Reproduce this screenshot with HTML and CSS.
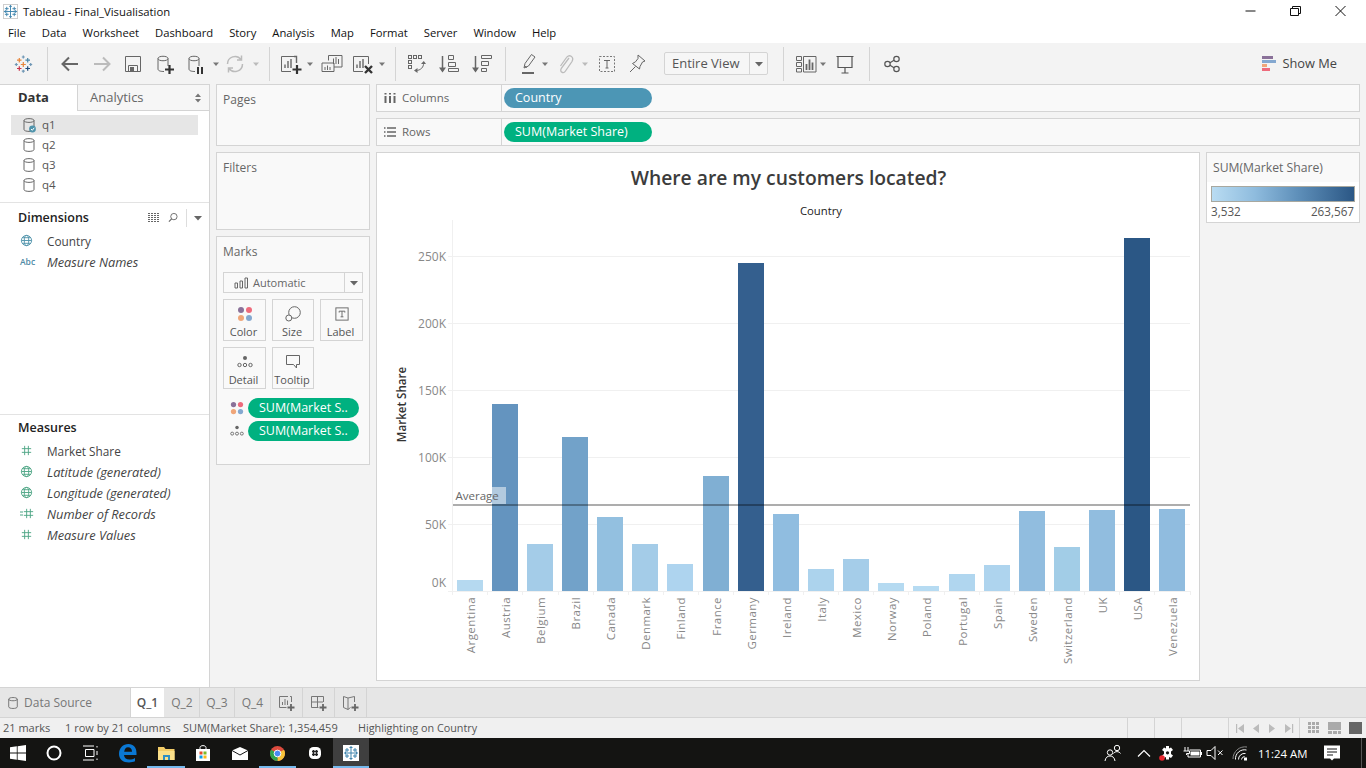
FILE: index.html
```html
<!DOCTYPE html>
<html lang="en">
<head>
<meta charset="utf-8">
<title>Tableau - Final_Visualisation</title>
<link rel="stylesheet" href="styles.css">
</head>
<body>
<svg class="defs" width="0" height="0" aria-hidden="true">
  <defs>
    <symbol id="cyl" viewBox="0 0 14 16"><path d="M2 3.5C2 1 12 1 12 3.5V12.5C12 15 2 15 2 12.5ZM2 3.5C2 6 12 6 12 3.5" fill="none" stroke="#666" stroke-width="1"/></symbol>
    <symbol id="globe" viewBox="0 0 14 14"><g fill="none" stroke="#4f93ab" stroke-width="1"><circle cx="7" cy="7" r="5.5"/><ellipse cx="7" cy="7" rx="2.4" ry="5.5"/><path d="M1.5 7H12.500M2.500 4H11.500M2.500 10H11.500"/></g></symbol>
    <symbol id="globeg" viewBox="0 0 14 14"><g fill="none" stroke="#4ea585" stroke-width="1"><circle cx="7" cy="7" r="5.5"/><ellipse cx="7" cy="7" rx="2.4" ry="5.5"/><path d="M1.5 7H12.500M2.500 4H11.500M2.500 10H11.500"/></g></symbol>
    <symbol id="hash" viewBox="0 0 14 14"><path d="M5 2V12M9 2V12M2 5H12M2 9H12" fill="none" stroke="#4ea585" stroke-width="1"/></symbol>
    <symbol id="dots4" viewBox="0 0 16 16"><circle cx="4" cy="4" r="3" fill="#8a7199"/><circle cx="12" cy="4" r="3" fill="#ee6b7c"/><circle cx="4" cy="12" r="3" fill="#f0a679"/><circle cx="12" cy="12" r="3" fill="#84a8d0"/></symbol>
    <symbol id="detail" viewBox="0 0 16 14"><circle cx="8" cy="3" r="2" fill="#666"/><g fill="none" stroke="#666"><circle cx="2.500" cy="10" r="1.700"/><circle cx="8" cy="10" r="1.700"/><circle cx="13.500" cy="10" r="1.700"/></g></symbol>
    <symbol id="flake" viewBox="0 0 16 16"><g fill="none" stroke="#3f84ad" stroke-width="1"><path d="M8 1V15M1 8H15M6.500 2.500H9.500M6.500 13.500H9.500M2.500 6.500V9.500M13.500 6.500V9.500M4 3V7M2 5H6M12 3V7M10 5H14M4 9V13M2 11H6M12 9V13M10 11H14"/></g></symbol>
    <symbol id="caret" viewBox="0 0 8 24"><path d="M1 10.500H7L4 14Z" fill="#777"/></symbol>
    <symbol id="caretl" viewBox="0 0 8 24"><path d="M1 10.500H7L4 14Z" fill="#bbb"/></symbol>
  </defs>
</svg>

<header class="titlebar">
  <svg class="applogo" width="15" height="15" viewBox="0 0 16 16"><rect x=".5" y=".5" width="15" height="15" fill="#fff" stroke="#ccc"/><use href="#flake" width="16" height="16"/></svg>
  <span class="apptitle">Tableau - Final_Visualisation</span>
  <div class="winctl">
    <svg width="45" height="20" viewBox="0 0 45 20"><path d="M17.500 10H27.500" stroke="#111"/></svg>
    <svg width="45" height="20" viewBox="0 0 45 20"><path d="M17.500 7.500H25.500V14.500H17.500ZM19.500 7.500V5.500H27.500V12.500H25.500" fill="none" stroke="#111"/></svg>
    <svg width="45" height="20" viewBox="0 0 45 20"><path d="M17.500 5L27.500 15M27.500 5L17.500 15" stroke="#111" fill="none"/></svg>
  </div>
</header>

<nav class="menubar">
  <span>File</span><span>Data</span><span>Worksheet</span><span>Dashboard</span><span>Story</span><span>Analysis</span><span>Map</span><span>Format</span><span>Server</span><span>Window</span><span>Help</span>
</nav>

<div class="toolbar">
  <svg class="ic m11" viewBox="0 0 24 24"><g fill="none" stroke-width="1.200"><path d="M12.300 3.500V6.500M10.800 5H13.800M5.300 11V14M3.800 12.500H6.800M19.700 11V14M18.200 12.500H21.200M12.300 17.700V20.700M10.800 19.200H13.800" stroke="#6f97b5"/><path d="M8.300 6V10.500M6 8.200H10.500M12.300 10V15M9.800 12.500H14.800" stroke="#e8853a"/><path d="M16.700 6V10.500M14.400 8.200H19" stroke="#4b87a8"/><path d="M8.300 14.200V18.800M6 16.500H10.500" stroke="#c8334b"/><path d="M16.700 14.200V18.800M14.400 16.500H19" stroke="#1f4a78"/></g></svg>
  <i class="sep m12"></i>
  <svg class="ic m10" viewBox="0 0 24 24"><path d="M20 12H5M11 5.500L4.500 12L11 18.500" fill="none" stroke="#666" stroke-width="2"/></svg>
  <svg class="ic m8" viewBox="0 0 24 24"><path d="M4 12H19M13 5.500L19.500 12L13 18.500" fill="none" stroke="#bbb" stroke-width="2"/></svg>
  <svg class="ic m7" viewBox="0 0 24 24"><path d="M4.500 4.500H19.500V19.500H4.500ZM7.500 19.500V13.500H16.500V19.500" fill="none" stroke="#666"/><rect x="9" y="15" width="4" height="4.500" fill="#666"/></svg>
  <svg class="ic m8" viewBox="0 0 24 24"><path d="M5 6.500C5 3.500 15 3.500 15 6.500V14M5 6.500C5 9.500 15 9.500 15 6.500M5 6.500V17C5 19 8 19.500 11 19.500" fill="none" stroke="#666"/><path d="M16.500 13V22M12 17.500H21" stroke="#333" stroke-width="2.200"/></svg>
  <svg class="ic m7" viewBox="0 0 24 24"><path d="M5 6.500C5 3.500 15 3.500 15 6.500V14M5 6.500C5 9.500 15 9.500 15 6.500M5 6.500V17C5 19 8 19.500 11 19.500" fill="none" stroke="#666"/><path d="M14 15V22M18 15V22" stroke="#333" stroke-width="2"/></svg>
  <svg class="car m4" viewBox="0 0 8 24"><use href="#caret"/></svg>
  <svg class="ic m3" viewBox="0 0 24 24"><path d="M4.500 12A7.500 7.500 0 0 1 18 7.500M19.500 12A7.500 7.500 0 0 1 6 16.500M18.500 3.500V8H14M5.500 20.500V16H10" fill="none" stroke="#bbb" stroke-width="1.500"/></svg>
  <svg class="car m5" viewBox="0 0 8 24"><use href="#caretl"/></svg>
  <i class="sep m9"></i>
  <svg class="ic m9" viewBox="0 0 24 24"><path d="M15 4.500H2.500V19.500H12" fill="none" stroke="#666"/><path d="M15 4.500H17.500V11M6 16V12.500M9 16V9M12 16V7" fill="none" stroke="#666" stroke-width="1.400"/><path d="M18 13V22M13.500 17.500H22.500" stroke="#333" stroke-width="2.200"/></svg>
  <svg class="car m3" viewBox="0 0 8 24"><use href="#caret"/></svg>
  <svg class="ic m6" viewBox="0 0 24 24"><path d="M8.500 8.500V3.500H22V15H14M2 11H14V19.500H2Z" fill="none" stroke="#666"/><path d="M13.500 12V6.500M16 12V5M18.500 12V7M5 18V15M7.500 18V13.500M10 18V15" stroke="#666"/></svg>
  <svg class="ic m7" viewBox="0 0 24 24"><path d="M17.500 4.500H2.500V19.500H12M17.500 4.500V12" fill="none" stroke="#666"/><path d="M6 16V12.500M9 16V9M12 16V7" stroke="#666" stroke-width="1.400"/><path d="M14 14L21 21M21 14L14 21" stroke="#333" stroke-width="2.400"/></svg>
  <svg class="car m3" viewBox="0 0 8 24"><use href="#caret"/></svg>
  <i class="sep m9"></i>
  <svg class="ic m9" viewBox="0 0 24 24"><g fill="none" stroke="#666"><rect x="3.500" y="3.500" width="3" height="3"/><rect x="8.500" y="3.500" width="3" height="3"/><rect x="13.500" y="3.500" width="3" height="3"/><rect x="3.500" y="8.500" width="3" height="3"/><rect x="3.500" y="13.500" width="3" height="3"/><path d="M18.500 11C19 15 15.500 18.500 11 18.500"/></g><path d="M16 12L18.800 9L21 12ZM12.500 16V21L9 18.500Z" fill="#666"/></svg>
  <svg class="ic m8" viewBox="0 0 24 24"><path d="M5.500 4V19" stroke="#666" stroke-width="1.500"/><path d="M2 15.500L5.500 20.500L9 15.500Z" fill="#666"/><path d="M11.500 3.500H16.500V7.500H11.500ZM11.500 10.500H18.500V14.500H11.500ZM11.500 16.500H21.500V19.500H11.500Z" fill="none" stroke="#666"/></svg>
  <svg class="ic m9" viewBox="0 0 24 24"><path d="M5.500 4V19" stroke="#666" stroke-width="1.500"/><path d="M2 15.500L5.500 20.500L9 15.500Z" fill="#666"/><path d="M11.500 3.500H21.500V6.500H11.500ZM11.500 9.500H18.500V13.500H11.500ZM11.500 16.500H16.500V19.500H11.500Z" fill="none" stroke="#666"/></svg>
  <i class="sep m11"></i>
  <svg class="ic m10" viewBox="0 0 24 24"><path d="M8 16L9 11.500L15.500 2.500L19 5L12.500 14ZM8.500 14L11 15.500" fill="none" stroke="#666"/><path d="M6 21H18" stroke="#666" stroke-width="2"/></svg>
  <svg class="car m1" viewBox="0 0 8 24"><use href="#caret"/></svg>
  <svg class="ic m4" viewBox="0 0 24 24"><path d="M16 6L8.500 16C6 20 10.500 22 12.500 19L19 9.500C21.500 5 16 1.500 13.500 5.500L7.500 14" fill="none" stroke="#bbb" stroke-width="1.300"/></svg>
  <svg class="car m4" viewBox="0 0 8 24"><use href="#caretl"/></svg>
  <svg class="ic m6" viewBox="0 0 24 24"><rect x="4.500" y="4.500" width="15" height="15" fill="none" stroke="#777" stroke-dasharray="2 1.500"/><path d="M9 8.500H15M12 8.500V16M10.500 16H13.500" fill="none" stroke="#666"/></svg>
  <svg class="ic m6" viewBox="0 0 24 24"><path d="M13 3L20 9L17.500 10L15 14.500L14.500 17L7.500 11.500L10.500 9.800L13 6.500ZM10.500 14.500L5 20" fill="none" stroke="#666"/></svg>
  <div class="select m15"><span class="sel-label">Entire View</span><span class="sel-arrow"><svg width="8" height="24" viewBox="0 0 8 24"><path d="M0 10H8L4 14.500Z" fill="#666"/></svg></span></div>
  <i class="sep m15"></i>
  <svg class="ic m10" viewBox="0 0 24 24"><path d="M2.500 4.500H7.500V8.500H2.500ZM2.500 10.500H7.500V14.500H2.500ZM2.500 16.500H7.500V20H2.500ZM9.500 4.500H22V20H9.500Z" fill="none" stroke="#666"/><path d="M12.500 18V12M15.500 18V7.500M18.500 18V10.500" stroke="#666" stroke-width="1.800"/></svg>
  <svg class="car m1" viewBox="0 0 8 24"><use href="#caret"/></svg>
  <svg class="ic m6" viewBox="0 0 24 24"><path d="M3.500 4.500H20.500M5 4.500V15.500H19V4.500M12 15.500V21M8.500 21H15.500" fill="none" stroke="#555" stroke-width="1.200"/></svg>
  <i class="sep m12"></i>
  <svg class="ic m10" viewBox="0 0 24 24"><g fill="none" stroke="#555" stroke-width="1.200"><circle cx="16.500" cy="7" r="2.700"/><circle cx="16.500" cy="17" r="2.700"/><circle cx="7.500" cy="12" r="2.700"/><path d="M10 10.700L14 8.300M10 13.300L14 15.700"/></g></svg>
  <div class="showme">
    <svg width="15" height="16" viewBox="0 0 15 16"><rect y="0" width="11" height="3" fill="#8a7199"/><rect y="4" width="14" height="3" fill="#84a8d0"/><rect y="8" width="5" height="3" fill="#f0a679"/><rect y="12" width="8" height="3" fill="#ee6b7c"/></svg>
    <span>Show Me</span>
  </div>
</div>

<main class="main">
  <aside class="datapane">
    <div class="tabs">
      <span class="tab-data">Data</span>
      <span class="tab-analytics"><span class="an-label">Analytics</span>
        <svg width="8" height="10" viewBox="0 0 8 10"><path d="M1 4H7L4 .5ZM1 6H7L4 9.500Z" fill="#777"/></svg>
      </span>
    </div>
    <ul class="sources">
      <li class="on"><svg width="14" height="16" viewBox="0 0 14 16"><use href="#cyl" width="14" height="16"/><circle cx="10.500" cy="12" r="3.400" fill="#4f93ab"/><path d="M9 12L10.300 13.300L12.200 10.800" fill="none" stroke="#fff"/></svg><span>q1</span></li>
      <li><svg width="14" height="16"><use href="#cyl" width="14" height="16"/></svg><span>q2</span></li>
      <li><svg width="14" height="16"><use href="#cyl" width="14" height="16"/></svg><span>q3</span></li>
      <li><svg width="14" height="16"><use href="#cyl" width="14" height="16"/></svg><span>q4</span></li>
    </ul>
    <section class="fields dims">
      <div class="fieldhead"><b>Dimensions</b>
        <span class="headtools">
          <svg width="12" height="9" viewBox="0 0 12 9"><path d="M0 .5H12M0 2.500H12M0 4.500H12M0 6.500H12M0 8.500H12" stroke="#666" stroke-dasharray="2 1"/></svg>
          <svg width="10" height="11" viewBox="0 0 11 11"><circle cx="6.500" cy="4.500" r="3.500" fill="none" stroke="#666"/><path d="M4 7L1 10" stroke="#666" stroke-width="1.300"/></svg>
          <i class="toolsep"></i>
          <svg width="8" height="6" viewBox="0 0 8 6"><path d="M0 1H8L4 5.500Z" fill="#666"/></svg>
        </span>
      </div>
      <div class="field"><span class="fi"><svg width="13" height="13"><use href="#globe" width="13" height="13"/></svg></span>Country</div>
      <div class="field it"><span class="fi abc">Abc</span>Measure Names</div>
    </section>
    <section class="fields meas">
      <div class="fieldhead"><b>Measures</b></div>
      <div class="field"><span class="fi"><svg width="13" height="13"><use href="#hash" width="13" height="13"/></svg></span>Market Share</div>
      <div class="field it"><span class="fi"><svg width="13" height="13"><use href="#globeg" width="13" height="13"/></svg></span>Latitude (generated)</div>
      <div class="field it"><span class="fi"><svg width="13" height="13"><use href="#globeg" width="13" height="13"/></svg></span>Longitude (generated)</div>
      <div class="field it"><span class="fi"><svg width="16" height="13" viewBox="0 0 16 13"><path d="M0 5H3M0 8H3" stroke="#4ea585"/><use href="#hash" x="2" width="13" height="13"/></svg></span>Number of Records</div>
      <div class="field it"><span class="fi"><svg width="13" height="13"><use href="#hash" width="13" height="13"/></svg></span>Measure Values</div>
    </section>
  </aside>

  <div class="cards">
    <section class="card pages"><h3>Pages</h3></section>
    <section class="card filters"><h3>Filters</h3></section>
    <section class="card marks">
      <h3>Marks</h3>
      <div class="marktype">
        <span class="mt-label"><svg width="14" height="12" viewBox="0 0 14 12"><path d="M1 6H3.500V11H1ZM6 4H8.500V11H6ZM11 1H13.500V11H11Z" fill="none" stroke="#666"/></svg>Automatic</span>
        <span class="mt-arrow"><svg width="8" height="6" viewBox="0 0 8 6"><path d="M0 1H8L4 5.500Z" fill="#666"/></svg></span>
      </div>
      <div class="markgrid">
        <div class="mbtn"><svg width="16" height="16"><use href="#dots4" width="16" height="16"/></svg><span>Color</span></div>
        <div class="mbtn"><svg width="16" height="16" viewBox="0 0 16 16"><circle cx="9.500" cy="6.500" r="5.800" fill="none" stroke="#666"/><circle cx="3.800" cy="12" r="3" fill="#fafafa" stroke="#666"/></svg><span>Size</span></div>
        <div class="mbtn"><svg width="16" height="16" viewBox="-1.500 -1.500 17 17"><rect x=".5" y=".5" width="13" height="13" fill="none" stroke="#666"/><path d="M4 4H10M7 4V10M5.500 10H8.500M4 4V5.500M10 4V5.500" fill="none" stroke="#666"/></svg><span>Label</span></div>
        <div class="mbtn"><svg width="16" height="16"><use href="#detail" width="16" height="16"/></svg><span>Detail</span></div>
        <div class="mbtn"><svg width="16" height="16" viewBox="0 0 16 16"><path d="M1.500 1.500H14.500V10.500H11.500V14L8.500 10.500H1.500Z" fill="none" stroke="#666"/></svg><span>Tooltip</span></div>
      </div>
      <div class="markpill"><svg width="14" height="14"><use href="#dots4" width="14" height="14"/></svg><span class="pill green">SUM(Market S..</span></div>
      <div class="markpill"><svg width="14" height="14"><use href="#detail" width="14" height="14"/></svg><span class="pill green">SUM(Market S..</span></div>
    </section>
  </div>

  <div class="work">
    <div class="shelf">
      <div class="shelflabel"><svg width="12" height="10" viewBox="0 0 12 10"><path d="M1.500 3V10M6 3V10M10.500 3V10" stroke="#666" stroke-width="2"/><path d="M1.500 0V1.500M6 0V1.500M10.500 0V1.500" stroke="#666" stroke-width="2"/></svg><span>Columns</span></div>
      <div class="shelfbody"><span class="pill blue wide">Country</span></div>
    </div>
    <div class="shelf">
      <div class="shelflabel"><svg width="12" height="10" viewBox="0 0 12 10"><path d="M3 1H12M3 5H12M3 9H12" stroke="#666" stroke-width="1.600"/><path d="M0 1H1.500M0 5H1.500M0 9H1.500" stroke="#666" stroke-width="1.600"/></svg><span>Rows</span></div>
      <div class="shelfbody"><span class="pill green wide">SUM(Market Share)</span></div>
    </div>
    <div class="vizrow">
      <div class="viz">
        <svg class="chart" width="822" height="527" viewBox="377 153 822 527">
          <text class="charttitle" x="788.500" y="185" text-anchor="middle">Where are my customers located?</text>
          <text class="axtitle" x="821" y="215" text-anchor="middle">Country</text>
          <text class="axtitle strong" transform="translate(405.500 404.500) rotate(-90)" text-anchor="middle">Market Share</text>
          <g class="grid">
            <path d="M452.500 220V595M448 256.500H1190M448 323.500H1190M448 390.500H1190M448 457.500H1190M448 524.500H1190M448 591.500H1190"/>
            <path d="M452.500 591V595M487.500 591V595M522.500 591V595M558.500 591V595M593.500 591V595M628.500 591V595M663.500 591V595M698.500 591V595M733.500 591V595M768.500 591V595M803.500 591V595M838.500 591V595M873.500 591V595M908.500 591V595M944.500 591V595M979.500 591V595M1014.500 591V595M1049.500 591V595M1084.500 591V595M1119.500 591V595M1154.500 591V595M1190.500 591V595"/>
          </g>
          <g class="yticks" text-anchor="end">
            <text x="446" y="261">250K</text><text x="446" y="328">200K</text><text x="446" y="395">150K</text><text x="446" y="462">100K</text><text x="446" y="529">50K</text><text x="446" y="587">0K</text>
          </g>
          <g>
            <rect x="457" y="580" width="26" height="11" fill="#b5d9f0"/>
            <rect x="492" y="404" width="26" height="187" fill="#6494bf"/>
            <rect x="527" y="544" width="26" height="47" fill="#a4cce8"/>
            <rect x="562" y="437" width="26" height="154" fill="#72a2c9"/>
            <rect x="597" y="517" width="26" height="74" fill="#93c0e0"/>
            <rect x="632" y="544" width="26" height="47" fill="#a4cce8"/>
            <rect x="667" y="564" width="26" height="27" fill="#aed4ef"/>
            <rect x="703" y="476" width="26" height="115" fill="#80afd3"/>
            <rect x="738" y="263" width="26" height="328" fill="#345f8e"/>
            <rect x="773" y="514" width="26" height="77" fill="#90bde0"/>
            <rect x="808" y="569" width="26" height="22" fill="#acd3ed"/>
            <rect x="843" y="559" width="26" height="32" fill="#a5cde9"/>
            <rect x="878" y="583" width="26" height="8" fill="#b5daf1"/>
            <rect x="913" y="586" width="26" height="5" fill="#b6dbf2"/>
            <rect x="949" y="574" width="26" height="17" fill="#b0d6ef"/>
            <rect x="984" y="565" width="26" height="26" fill="#aed4ee"/>
            <rect x="1019" y="511" width="26" height="80" fill="#91bddf"/>
            <rect x="1054" y="547" width="26" height="44" fill="#a2cde7"/>
            <rect x="1089" y="510" width="26" height="81" fill="#91bddf"/>
            <rect x="1124" y="238" width="26" height="353" fill="#2b5785"/>
            <rect x="1159" y="509" width="26" height="82" fill="#90bcdf"/>
          </g>
          <rect x="455" y="487" width="51" height="17" fill="#fff" fill-opacity=".5"/>
          <rect x="453" y="504" width="737" height="2" fill="#000" fill-opacity=".32"/>
          <text class="avg" x="455.500" y="500">Average</text>
          <g class="xticks" text-anchor="end">
            <text transform="translate(474.500 597) rotate(-90)">Argentina</text>
            <text transform="translate(509.500 597) rotate(-90)">Austria</text>
            <text transform="translate(544.500 597) rotate(-90)">Belgium</text>
            <text transform="translate(579.500 597) rotate(-90)">Brazil</text>
            <text transform="translate(614.500 597) rotate(-90)">Canada</text>
            <text transform="translate(649.500 597) rotate(-90)">Denmark</text>
            <text transform="translate(684.500 597) rotate(-90)">Finland</text>
            <text transform="translate(720.500 597) rotate(-90)">France</text>
            <text transform="translate(755.500 597) rotate(-90)">Germany</text>
            <text transform="translate(790.500 597) rotate(-90)">Ireland</text>
            <text transform="translate(825.500 597) rotate(-90)">Italy</text>
            <text transform="translate(860.500 597) rotate(-90)">Mexico</text>
            <text transform="translate(895.500 597) rotate(-90)">Norway</text>
            <text transform="translate(930.500 597) rotate(-90)">Poland</text>
            <text transform="translate(966.500 597) rotate(-90)">Portugal</text>
            <text transform="translate(1001.500 597) rotate(-90)">Spain</text>
            <text transform="translate(1036.500 597) rotate(-90)">Sweden</text>
            <text transform="translate(1071.500 597) rotate(-90)">Switzerland</text>
            <text transform="translate(1106.500 597) rotate(-90)">UK</text>
            <text transform="translate(1141.500 597) rotate(-90)">USA</text>
            <text transform="translate(1176.500 597) rotate(-90)">Venezuela</text>
          </g>
        </svg>
      </div>
      <aside class="legend">
        <div class="legendhead">SUM(Market Share)</div>
        <div class="legendbody">
          <div class="ramp"></div>
          <div class="ramplabels"><span>3,532</span><span>263,567</span></div>
        </div>
      </aside>
    </div>
  </div>
</main>

<div class="sheetbar">
  <div class="ds"><svg width="12" height="14"><use href="#cyl" width="12" height="14"/></svg>Data Source</div>
  <div class="stab active">Q_1</div>
  <div class="stab">Q_2</div>
  <div class="stab">Q_3</div>
  <div class="stab q4">Q_4</div>
  <div class="addtab"><svg width="18" height="18" viewBox="0 0 18 18"><path d="M10 2.500H1.500V13.500H8.500M12 2.500H13.500V8M4.500 11V8M7 11V5M9.500 11V6.500" fill="none" stroke="#777"/><path d="M13 10V17M9.500 13.500H16.500" stroke="#666" stroke-width="1.800"/></svg></div>
  <div class="addtab"><svg width="18" height="18" viewBox="0 0 18 18"><path d="M8.500 13.500H1.500V2.500H13.500V8M1.500 8H13M7.500 2.500V13.500" fill="none" stroke="#777"/><path d="M13 10V17M9.500 13.500H16.500" stroke="#666" stroke-width="1.800"/></svg></div>
  <div class="addtab"><svg width="18" height="18" viewBox="0 0 18 18"><path d="M8.500 13.500L6 15.500V4L1.500 2.500V13.500L6 15.500M6 4L12.500 2.500V8" fill="none" stroke="#777"/><path d="M13 10V17M9.500 13.500H16.500" stroke="#666" stroke-width="1.800"/></svg></div>
</div>

<footer class="statusbar">
  <span class="st1">21 marks</span>
  <span class="st2">1 row by 21 columns</span>
  <span class="st3">SUM(Market Share): 1,354,459</span>
  <span class="st4">Highlighting on Country</span>
  <div class="stcells">
    <i class="c27"></i><i class="c27"></i><i class="c47"></i>
    <div class="c71"><svg width="71" height="21" viewBox="0 0 71 21"><g fill="#bbb"><path d="M7 6V15H8.200V6ZM15 6V15L9 10.500ZM30 6V15L24 10.500ZM40 6V15L46 10.500ZM56 6V15L62 10.500ZM63 6V15H64.200V6Z"/></g></svg></div>
    <div class="c67"><svg width="67" height="21" viewBox="0 0 67 21"><g fill="#aaa"><path d="M8 4H11V7H8ZM12 4H15V7H12ZM16 4H19V7H16ZM8 8H11V11H8ZM12 8H15V11H12ZM16 8H19V11H16ZM8 12H11V15H8ZM12 12H15V15H12ZM16 12H19V15H16Z"/><path d="M28 4H41V12H28ZM28 13H32V16H28ZM33 13H37V16H33ZM38 13H41V16H38Z"/></g><rect x="49" y="4" width="13" height="12" fill="#666"/></svg></div>
  </div>
</footer>

<div class="taskbar">
  <div class="tk t36"><svg width="16" height="16" viewBox="0 0 16 16"><path d="M0 2.300L6.800 1.300V7.600H0ZM7.600 1.200L16 0V7.600H7.600ZM0 8.400H6.800V14.700L0 13.700ZM7.600 8.400H16V16L7.600 14.800Z" fill="#fff"/></svg></div>
  <div class="tk t36"><svg width="16" height="16" viewBox="0 0 16 16"><circle cx="8" cy="8" r="6.500" fill="none" stroke="#fff" stroke-width="2"/></svg></div>
  <div class="tk t37"><svg width="16" height="16" viewBox="0 0 16 16"><path d="M2.500 4.500H11V11.500H2.500ZM0 1H11M0 15H11M14 1V2.500M14 6V10M14 13.500V15" fill="none" stroke="#fff"/></svg></div>
  <div class="tk t38"><svg width="20" height="20" viewBox="0 0 20 20"><path d="M1 11C1 5 5 1 10.500 1C15.500 1 18.500 4.500 18.500 10V12H6C6.200 15 8.500 16.500 11.500 16.500C13.500 16.500 15.500 16 17 15V18.300C15.500 19 13.300 19.500 11 19.500C5 19.500 1 16 1 11ZM6.200 8.800H14C14 6 12.500 4.300 10 4.300C7.800 4.300 6.500 6.200 6.200 8.800Z" fill="#0a78d4"/></svg></div>
  <div class="tk t38 run"><svg width="17" height="15" viewBox="0 0 17 15"><path d="M0 1H6L7.500 3H16.500V14H0Z" fill="#f3cd68"/><path d="M0 5H16.500V14H0Z" fill="#fbe08a"/><path d="M5 9H12V14H10V11H7V14H5Z" fill="#2f8fc4"/></svg></div>
  <div class="tk t36"><svg width="16" height="16" viewBox="0 0 16 16"><path d="M1 4H15V16H1Z" fill="#fff"/><path d="M5 4V2.500C5 0 11 0 11 2.500V4" fill="none" stroke="#fff"/><rect x="4.500" y="6.500" width="3" height="3" fill="#e74b2a"/><rect x="8.500" y="6.500" width="3" height="3" fill="#7db928"/><rect x="4.500" y="10.500" width="3" height="3" fill="#0c9be6"/><rect x="8.500" y="10.500" width="3" height="3" fill="#fbb917"/></svg></div>
  <div class="tk t38"><svg width="16" height="13" viewBox="0 0 16 13"><path d="M0 3.500L8 0L16 3.500V13H0Z" fill="#fff"/><path d="M0 3.500L8 8L16 3.500" fill="none" stroke="#141414"/></svg></div>
  <div class="tk t37 run"><svg width="15" height="15" viewBox="0 0 16 16"><circle cx="8" cy="8" r="8" fill="#dd4b3e"/><path d="M8 8L14.900 4A8 8 0 0 1 8 16Z" fill="#f6c33a"/><path d="M8 8V16A8 8 0 0 1 1.100 4Z" fill="#2fa44f"/><circle cx="8" cy="8" r="3.600" fill="#4a8af4" stroke="#fff"/></svg></div>
  <div class="tk t37"><svg width="14" height="14" viewBox="0 0 14 14"><rect x="1" y="1" width="12" height="12" rx="4.500" fill="#fff"/><path d="M5.500 4V10M8.500 4V10M4 5.500H10M4 8.500H10" stroke="#222" stroke-width="1.400"/></svg></div>
  <div class="tk t36 run cur"><svg width="16" height="16" viewBox="0 0 16 16"><rect width="16" height="16" fill="#fff"/><use href="#flake" width="16" height="16"/></svg></div>
  <div class="tray">
    <svg class="ti" viewBox="0 0 20 20"><g fill="none" stroke="#fff"><circle cx="7" cy="9.500" r="2.700"/><path d="M2 18C2.500 14.500 4.500 13 7 13C9.500 13 11.500 14.500 12 18"/><circle cx="14" cy="5" r="2.700"/><path d="M10.500 10.500C12 8 16 8 17.500 10.500"/></g></svg>
    <svg class="ti m11" viewBox="0 0 20 20"><path d="M4 13.500L10 7.500L16 13.500" fill="none" stroke="#fff" stroke-width="1.200"/></svg>
    <svg class="ti m3" viewBox="0 0 20 20"><path d="M9 3H12V5.500L14 4.500L16 7L14 8.500V11L16 12.500L14 15L12 14V16.500H9V14L7 15L5 12.500L7 11V8.500L5 7L7 4.500L9 5.500Z" fill="#fff"/><circle cx="10.500" cy="9.800" r="1.600" fill="#141414"/><circle cx="5" cy="15" r="2.800" fill="#e8262e"/></svg>
    <svg class="ti m5" viewBox="0 0 20 20"><path d="M3 8V4M6 8V4M1.500 8H7.500V10.500H4.500V12M6 7.500H6" fill="none" stroke="#fff"/><path d="M7.500 7H18.500V14H6V10" fill="none" stroke="#fff"/><rect x="8.500" y="8.500" width="9" height="4" fill="#fff"/><path d="M19.500 9V12" stroke="#fff"/></svg>
    <svg class="ti m3" viewBox="0 0 20 20"><path d="M2 7.500H6L10 3.500V16.500L6 12.500H2Z" fill="none" stroke="#fff"/><path d="M13 7.500L17.500 12M17.500 7.500L13 12" stroke="#fff"/></svg>
    <svg class="ti m6" viewBox="0 0 20 20"><g fill="none" stroke="#fff"><path d="M2 16A12 12 0 0 1 16 4" stroke="#888"/><path d="M4.500 16.500A9 9 0 0 1 15.500 7"/><path d="M7.500 16.500A6 6 0 0 1 14.500 10.500"/><path d="M10.500 16.500A3.500 3.500 0 0 1 13.500 13.500"/></g><rect x="13" y="14.500" width="3" height="3" fill="#fff"/></svg>
    <span class="clock m7">11:24 AM</span>
    <svg class="ti m15" viewBox="0 0 20 20"><path d="M2 2.500H18V15.500H12L10 17.500L8 15.500H2Z" fill="#fff"/><path d="M5 6H15M5 9H15M5 12H11" stroke="#141414"/></svg>
    <i class="trayedge m19"></i>
  </div>
</div>
</body>
</html>
```

FILE: styles.css
```css
* { box-sizing: border-box; }
html, body { margin: 0; padding: 0; }
body {
  width: 1366px;
  height: 768px;
  overflow: hidden;
  display: flex;
  flex-direction: column;
  background: #fff;
  font-family: "Open Sans", "Noto Sans", sans-serif;
  font-size: 11.5px;
  color: #555;
}
.defs { position: absolute; }

.m1 { margin-left: 1px; } .m3 { margin-left: 3px; } .m4 { margin-left: 4px; } .m5 { margin-left: 5px; }
.m6 { margin-left: 6px; } .m7 { margin-left: 7px; } .m8 { margin-left: 8px; } .m9 { margin-left: 9px; }
.m10 { margin-left: 10px; } .m11 { margin-left: 11px; } .m12 { margin-left: 12px; } .m15 { margin-left: 15px; }
.m19 { margin-left: 19px; }

/* window chrome */
.titlebar { height: 22px; display: flex; align-items: center; padding-left: 3px; flex: none; }
.applogo { margin-right: 5px; }
.apptitle { font-size: 11.3px; color: #111; }
.winctl { margin-left: auto; display: flex; padding-right: 3px; }
.menubar { height: 21px; flex: none; display: flex; gap: 16px; padding-left: 8px; align-items: center; font-size: 11.25px; color: #111; }

/* toolbar */
.toolbar { height: 41px; flex: none; background: #f3f3f3; display: flex; align-items: center; }
.ic { width: 24px; height: 24px; flex: none; }
.car { width: 8px; height: 24px; flex: none; }
.sep { width: 1px; height: 34px; background: #d4d4d4; flex: none; }
.select { width: 104px; height: 23px; display: flex; flex: none; border: 1px solid #d4d4d4; border-radius: 2px; background: #f6f6f6; font-size: 13px; color: #555; }
.sel-label { flex: 1; padding-left: 7px; line-height: 20px; }
.sel-arrow { width: 18px; border-left: 1px solid #d4d4d4; display: flex; justify-content: center; align-items: center; }
.showme { margin-left: auto; padding: 0 29px 2px 0; display: flex; align-items: center; gap: 6px; font-size: 12.8px; color: #444; }
.showme svg { margin-top: 2px; }

/* main */
.main { flex: 1; min-height: 0; display: flex; background: #f3f3f3; }
.datapane { width: 210px; flex: none; background: #fff; border-right: 1px solid #d4d4d4; display: flex; flex-direction: column; }
.tabs { display: flex; height: 27px; flex: none; font-size: 13px; }
.tab-data { width: 77px; padding-left: 18px; line-height: 25px; font-weight: 700; color: #333; border-top: 1px solid #d4d4d4; }
.tab-analytics { flex: 1; display: flex; justify-content: space-between; align-items: center; padding: 0 7px 0 12px; background: #f6f6f6; border: 1px solid #d4d4d4; border-right: 0; color: #666; }
.an-label { margin-top: -2px; }
.sources { list-style: none; margin: 0; padding: 4px 11px 0; height: 92px; flex: none; border-bottom: 1px solid #e3e3e3; }
.sources li { height: 20px; display: flex; align-items: center; gap: 6px; padding-left: 11px; width: 187px; font-size: 11.5px; color: #555; }
.sources li span { margin-top: -2px; }
.sources li.on { background: #e6e6e6; }
.fields { flex: none; }
.dims { height: 212px; border-bottom: 1px solid #e3e3e3; }
.fieldhead { height: 27px; display: flex; align-items: center; justify-content: space-between; padding: 2px 7px 0 18px; }
.fieldhead b { font-size: 12.5px; font-weight: 600; color: #222; }
.meas .fieldhead { height: 25px; padding-top: 0; }
.headtools { display: flex; align-items: center; gap: 8px; }
.toolsep { width: 1px; height: 18px; background: #ddd; margin-right: -1px; }
.field { height: 21px; display: flex; align-items: center; font-size: 11.8px; color: #444; }
.field.it { font-style: italic; font-size: 12.8px; }
.fi { width: 47px; padding-left: 20px; display: flex; align-items: center; flex: none; }
.abc { font-style: normal; font-size: 8.5px; font-weight: 600; color: #4f8aa5; }

.cards { width: 154px; flex: none; margin-left: 6px; display: flex; flex-direction: column; gap: 6px; }
.card { border: 1px solid #d4d4d4; background: #f9f9f9; padding: 6px; }
.card h3 { margin: 0; font-size: 12px; font-weight: 400; color: #666; line-height: 18px; }
.pages { height: 62px; }
.filters { height: 78px; }
.marks { height: 229px; padding-top: 6px; }
.marktype { margin-top: 11px; width: 140px; height: 21px; display: flex; border: 1px solid #d4d4d4; background: #f9f9f9; font-size: 11px; color: #666; }
.mt-label { flex: 1; display: flex; align-items: center; gap: 5px; padding-left: 10px; }
.mt-arrow { width: 18px; border-left: 1px solid #d4d4d4; display: flex; align-items: center; justify-content: center; }
.markgrid { margin-top: 6px; display: grid; grid-template-columns: 43px 42px 43px; grid-auto-rows: 42px; gap: 6px; }
.mbtn { border: 1px solid #d4d4d4; display: flex; flex-direction: column; align-items: center; justify-content: flex-end; gap: 2px; font-size: 11px; color: #555; padding-bottom: 1px; }
.mbtn span { margin-left: -2px; }
.markpill { display: flex; align-items: center; gap: 4px; height: 20px; margin-top: 3px; padding-left: 7px; }
.markgrid + .markpill { margin-top: 9px; }
.pill { display: block; height: 20px; border-radius: 10px; color: #fff; font-size: 12.5px; line-height: 19px; padding-left: 11px; width: 111px; white-space: nowrap; overflow: hidden; }
.pill.wide { width: 148px; }
.green { background: #00b180; }
.blue { background: #4c96b5; }

.work { width: 984px; flex: none; margin-left: 6px; display: flex; flex-direction: column; gap: 6px; }
.shelf { height: 28px; flex: none; display: flex; border: 1px solid #d4d4d4; background: #f9f9f9; }
.shelflabel { width: 125px; border-right: 1px solid #d4d4d4; display: flex; align-items: center; gap: 6px; padding-left: 7px; font-size: 11.5px; color: #666; }
.shelflabel span { margin-top: -2px; }
.shelfbody { padding: 3px 2px; }
.vizrow { height: 529px; flex: none; display: flex; gap: 6px; align-items: flex-start; }
.viz { width: 824px; height: 529px; border: 1px solid #d4d4d4; background: #fff; flex: none; }
.chart { display: block; font-family: "Open Sans", "Noto Sans", sans-serif; }
.charttitle { font-size: 19.3px; font-weight: 600; fill: #3c3c3c; }
.axtitle { font-size: 11.3px; font-weight: 400; fill: #222; }
.axtitle.strong { font-weight: 600; fill: #333; font-size: 11.6px; }
.grid path { fill: none; stroke: #f0f0f0; stroke-width: 1; }
.yticks text { font-size: 12px; fill: #888; }
.xticks text { font-size: 11.5px; fill: #888; letter-spacing: .45px; }
.avg { font-size: 11.5px; fill: #666; }

.legend { width: 154px; height: 71px; flex: none; border: 1px solid #d4d4d4; background: #f9f9f9; }
.legendhead { height: 29px; padding: 6px 0 0 6px; font-size: 12.2px; color: #666; }
.legendbody { height: 40px; background: #fff; padding: 4px 4px 0; }
.ramp { height: 16px; border: 1px solid #a8a89f; background: linear-gradient(90deg, #b9dcf2, #8fbcde 30%, #5f90ba 60%, #2b5785); }
.ramplabels { display: flex; justify-content: space-between; font-size: 11.7px; color: #555; padding: 1px 1px 0 0; line-height: 16px; }

/* sheet tabs */
.sheetbar { height: 30px; flex: none; background: #e6e6e6; border-top: 1px solid #d4d4d4; display: flex; }
.ds { width: 131px; display: flex; align-items: center; gap: 5px; padding-left: 7px; font-size: 12px; color: #777; border-right: 1px solid #d4d4d4; }
.stab { width: 35px; border-right: 1px solid #d4d4d4; display: flex; align-items: center; justify-content: center; font-size: 12px; color: #777; }
.stab.q4 { width: 36px; }
.stab.active { width: 34px; background: #fff; color: #555; font-weight: 600; border-right-color: #e6e6e6; }
.addtab { width: 32px; border-right: 1px solid #d4d4d4; display: flex; align-items: center; justify-content: center; }

/* status bar */
.statusbar { height: 21px; flex: none; background: #f0f0f0; border-top: 1px solid #d4d4d4; display: flex; align-items: center; font-size: 11px; color: #555; }
.statusbar > span { margin-top: -2px; }
.st1 { margin-left: 3px; width: 62px; }
.st2 { width: 118px; }
.st3 { width: 175px; }
.st4 { font-size: 10.8px; }
.stcells { margin-left: auto; display: flex; height: 100%; }
.stcells > * { border-left: 1px solid #d4d4d4; display: block; height: 100%; }
.c27 { width: 27px; } .c47 { width: 47px; } .c71 { width: 71px; } .c67 { width: 67px; }

/* taskbar */
.taskbar { height: 30px; flex: none; background: #141412; display: flex; }
.tk { height: 30px; display: flex; align-items: center; justify-content: center; flex: none; }
.t36 { width: 36px; } .t37 { width: 37px; } .t38 { width: 38px; }
.run { box-shadow: inset 0 -2px 0 #76b9ed; }
.cur { background: #3f3f3f; }
.tray { margin-left: auto; display: flex; align-items: center; }
.ti { width: 20px; height: 20px; flex: none; }
.clock { width: 49px; font-size: 11.4px; color: #fff; white-space: nowrap; }
.trayedge { width: 1px; height: 30px; background: #555; margin-right: 4px; }
```
